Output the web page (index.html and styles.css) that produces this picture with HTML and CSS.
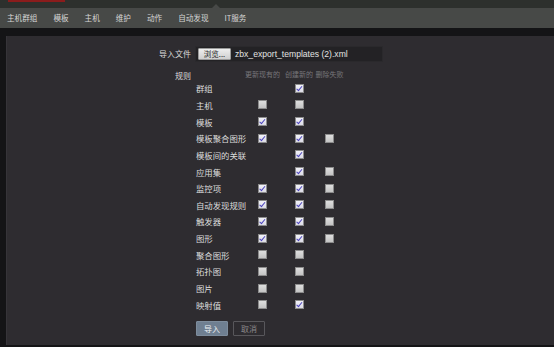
FILE: index.html
```html
<!DOCTYPE html>
<html lang="zh-CN">
<head>
  <meta charset="UTF-8">
  <title>导入模板</title>
  <link rel="stylesheet" href="styles.css">
</head>
<body>
  <div id="topbar">
    <div class="brand"></div>
    <div class="caret"></div>
  </div>
  <div id="menu">
    <a>主机群组</a>
    <a>模板</a>
    <a>主机</a>
    <a>维护</a>
    <a>动作</a>
    <a>自动发现</a>
    <a>IT服务</a>
  </div>

  <div id="main">
    <div id="panel">
      <form class="import-form">
        <label class="field-label file-label">导入文件</label>
        <div class="file-box">
          <button type="button" class="browse-btn">浏览...</button>
          <span class="file-name">zbx_export_templates (2).xml</span>
        </div>

        <label class="field-label rules-label">规则</label>
        <div class="rules">
          <span></span>
          <span class="col-head">更新现有的</span>
          <span class="col-head">创建新的</span>
          <span class="col-head">删除失败</span>

          <span class="rule-name">群组</span>
          <span></span><input type="checkbox" checked><span></span>

          <span class="rule-name">主机</span>
          <input type="checkbox"><input type="checkbox"><span></span>

          <span class="rule-name">模板</span>
          <input type="checkbox" checked><input type="checkbox" checked><span></span>

          <span class="rule-name">模板聚合图形</span>
          <input type="checkbox" checked><input type="checkbox" checked><input type="checkbox">

          <span class="rule-name">模板间的关联</span>
          <span></span><input type="checkbox" checked><span></span>

          <span class="rule-name">应用集</span>
          <span></span><input type="checkbox" checked><input type="checkbox">

          <span class="rule-name">监控项</span>
          <input type="checkbox" checked><input type="checkbox" checked><input type="checkbox">

          <span class="rule-name">自动发现规则</span>
          <input type="checkbox" checked><input type="checkbox" checked><input type="checkbox">

          <span class="rule-name">触发器</span>
          <input type="checkbox" checked><input type="checkbox" checked><input type="checkbox">

          <span class="rule-name">图形</span>
          <input type="checkbox" checked><input type="checkbox" checked><input type="checkbox">

          <span class="rule-name">聚合图形</span>
          <input type="checkbox"><input type="checkbox"><span></span>

          <span class="rule-name">拓扑图</span>
          <input type="checkbox"><input type="checkbox"><span></span>

          <span class="rule-name">图片</span>
          <input type="checkbox"><input type="checkbox"><span></span>

          <span class="rule-name">映射值</span>
          <input type="checkbox"><input type="checkbox" checked><span></span>
        </div>

        <span></span>
        <div class="actions">
          <button type="button" class="btn btn-primary">导入</button>
          <button type="button" class="btn btn-cancel">取消</button>
        </div>
      </form>
    </div>
  </div>
</body>
</html>
```

FILE: styles.css
```css
:root {
  --page-bg: #141416;
  --top-bg: #2d302d;
  --menu-bg: #474947;
  --panel-bg: #2e2c30;
  --text: #dcdcdc;
  --muted: #77767a;
}

body {
  margin: 0;
  background-color: var(--page-bg);
  font-family: "Noto Sans CJK SC", "Liberation Sans", sans-serif;
  color: var(--text);
}

#topbar {
  position: relative;
  height: 8px;
  background-color: var(--top-bg);
}

.brand {
  margin-left: 8px;
  width: 57px;
  height: 2px;
  background-color: #8a1c1c;
}

.caret {
  position: absolute;
  left: 212px;
  bottom: 0;
  border-left: 4px solid transparent;
  border-right: 4px solid transparent;
  border-bottom: 4px solid var(--menu-bg);
}

#menu {
  display: flex;
  align-items: center;
  gap: 16px;
  height: 20px;
  padding-left: 7px;
  background-color: var(--menu-bg);
  font-size: 7.6px;
}

#menu a {
  color: #d6d6d6;
  line-height: 1;
}

#main {
  padding: 8px 0 0 6px;
}

#panel {
  height: 309px;
  box-sizing: border-box;
  padding: 10px 0 0 124px;
  background-color: var(--panel-bg);
  border-left: 1px solid #363439;
}

.import-form {
  display: grid;
  grid-template-columns: 60px auto;
  column-gap: 4px;
  row-gap: 6px;
  align-items: start;
}

.field-label {
  text-align: right;
  font-size: 8px;
  line-height: 12px;
}

.file-label {
  align-self: center;
}

.rules-label {
  padding-top: 2px;
}

.file-box {
  display: flex;
  align-items: center;
  width: 188px;
  height: 16px;
  box-sizing: border-box;
  background-color: #232225;
  border: 1px solid #2a292c;
}

.browse-btn {
  margin-left: 2px;
  width: 33px;
  height: 12px;
  padding: 0;
  font-family: inherit;
  font-size: 7.5px;
  line-height: 10px;
  color: #1c1c1c;
  background: linear-gradient(#eeeeee, #cfcfcf);
  border: 1px solid #9a9a9a;
  border-radius: 1px;
}

.file-name {
  margin-left: 4px;
  font-family: "Liberation Sans", sans-serif;
  font-size: 8.6px;
  color: #e2e2e2;
}

.rules {
  display: grid;
  grid-template-columns: 50px 33px 40px 21px;
  grid-template-rows: 12px;
  grid-auto-rows: 16.65px;
  align-items: center;
  justify-items: center;
  padding-left: 1px;
}

.col-head {
  font-size: 7px;
  color: var(--muted);
  white-space: nowrap;
}

.rule-name {
  justify-self: start;
  font-size: 8.4px;
  white-space: nowrap;
}

.rules input[type="checkbox"] {
  appearance: none;
  -webkit-appearance: none;
  position: relative;
  margin: 0;
  width: 9px;
  height: 9px;
  box-sizing: border-box;
  background: linear-gradient(#dedede, #c4c4c4);
  border: 1px solid #8c8c8c;
}

.rules input[type="checkbox"]:checked {
  background: linear-gradient(#f2f2f8, #dcdce6);
}

.rules input[type="checkbox"]:checked::after {
  content: "";
  position: absolute;
  left: 2.2px;
  top: 0;
  width: 2px;
  height: 4.5px;
  border-right: 1.4px solid #4a42bd;
  border-bottom: 1.4px solid #4a42bd;
  transform: rotate(40deg);
}

.actions {
  display: flex;
  gap: 5px;
  margin-top: 2px;
  padding-left: 1px;
}

.btn {
  width: 32px;
  height: 15px;
  padding: 0;
  font-family: inherit;
  font-size: 8px;
  line-height: 13px;
  border-radius: 1px;
}

.btn-primary {
  color: #eef1f4;
  background-color: #6f7f91;
  border: 1px solid #7d8c9c;
}

.btn-cancel {
  color: #8a898c;
  background-color: transparent;
  border: 1px solid #58575b;
}
```
